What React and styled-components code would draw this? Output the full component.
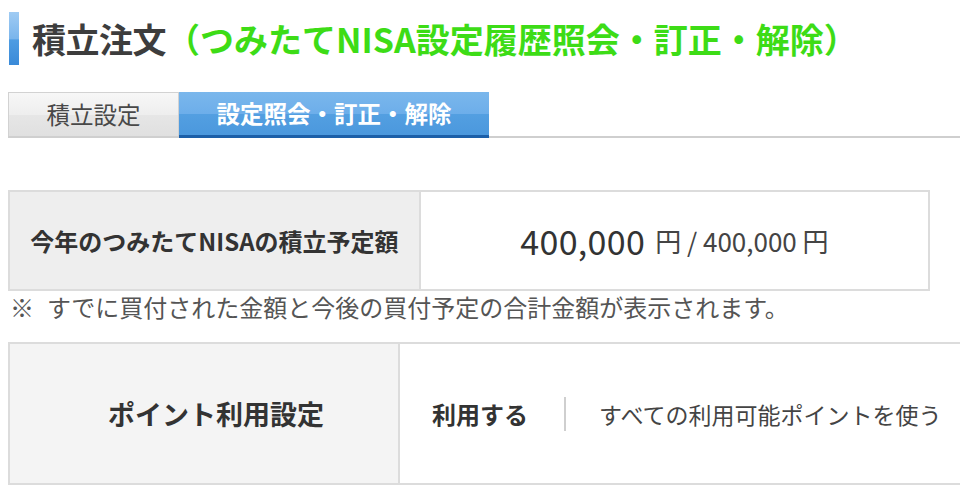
import React from "react";
import styled, { createGlobalStyle } from "styled-components";

const GlobalStyle = createGlobalStyle`
  html, body {
    margin: 0;
    padding: 0;
    background: #fff;
    overflow: hidden;
  }
  body {
    font-family: "Noto Sans CJK JP", "Noto Sans", sans-serif;
    color: #333;
  }
`;

const Page = styled.div`
  width: 960px;
  height: 503px;
  padding: 12px 0 0 8px;
  box-sizing: border-box;
  overflow: hidden;
`;

const Heading = styled.h1`
  display: flex;
  align-items: center;
  margin: 0;
  height: 53px;
  font-size: 34px;
  font-weight: 700;
  line-height: 1;
  white-space: nowrap;
`;

const HeadingBar = styled.span`
  width: 10px;
  height: 53px;
  margin: 0 13px 0 1px;
  background: linear-gradient(#9fcbf3 0%, #7ab5ec 50%, #4e9ce2 53%, #3a8ad8 100%);
`;

const HeadingMain = styled.span`
  color: #3d3d3d;
  letter-spacing: -0.5px;
`;

const HeadingSub = styled.span`
  color: #3ddc16;
`;

const Tabs = styled.nav`
  display: flex;
  margin-top: 27px;
  height: 44px;
  border-bottom: 2px solid #cfcfcf;
`;

const Tab = styled.div`
  display: flex;
  align-items: center;
  justify-content: center;
  width: ${(p) => p.$width}px;
  box-sizing: border-box;
  font-size: 23.5px;
  line-height: 1;
  ${(p) =>
    p.$active
      ? `
    color: #fff;
    font-weight: 700;
    background: linear-gradient(#7ab7ec 0%, #6daeea 50%, #539fe1 52%, #4b98dd 100%);
    border-bottom: 3px solid #1c5fa8;
    margin-bottom: -2px;
  `
      : `
    color: #484848;
    background: linear-gradient(#f7f7f7 0%, #eeeeee 50%, #e6e6e6 52%, #e0e0e0 100%);
    border: 1px solid #d2d2d2;
    border-bottom: none;
  `}
`;

const InfoTable = styled.div`
  display: grid;
  grid-template-columns: ${(p) => p.$labelWidth}px 1fr;
  width: ${(p) => p.$width}px;
  height: ${(p) => p.$height}px;
  margin-top: ${(p) => p.$top}px;
  border: 2px solid #dcdcdc;
  box-sizing: border-box;
`;

const LabelCell = styled.div`
  display: flex;
  align-items: center;
  justify-content: center;
  padding-left: ${(p) => p.$shift || 0}px;
  background: ${(p) => p.$bg};
  border-right: 2px solid #dcdcdc;
  font-weight: 700;
  font-size: ${(p) => p.$size}px;
  color: #333;
  white-space: nowrap;
`;

const ValueCell = styled.div`
  display: flex;
  align-items: center;
  justify-content: ${(p) => (p.$left ? "flex-start" : "center")};
  padding-left: ${(p) => (p.$left ? "32px" : "0")};
  white-space: nowrap;
  color: #333;
`;

const Amount = styled.span`
  font-size: 34px;
  margin-right: 10px;
  letter-spacing: 0.3px;
`;

const AmountSub = styled.span`
  font-size: 26px;
  color: #444;
`;

const Note = styled.p`
  margin: 3px 0 0 2px;
  font-size: 24px;
  line-height: 26px;
  color: #555;
  white-space: nowrap;
`;

const NoteMark = styled.span`
  margin-right: 13px;
`;

const PointOn = styled.span`
  font-size: 24px;
  font-weight: 700;
  color: #333;
`;

const Divider = styled.span`
  width: 2px;
  height: 34px;
  margin: 0 33px 0 36px;
  background: #cfcfcf;
`;

const PointText = styled.span`
  font-size: 23px;
  color: #444;
`;

export default function App() {
  return (
    <>
      <GlobalStyle />
      <Page>
        <Heading>
          <HeadingBar />
          <HeadingMain>積立注文</HeadingMain>
          <HeadingSub>（つみたてNISA設定履歴照会・訂正・解除）</HeadingSub>
        </Heading>

        <Tabs>
          <Tab $width={171}>積立設定</Tab>
          <Tab $width={310} $active>
            設定照会・訂正・解除
          </Tab>
        </Tabs>

        <InfoTable $labelWidth={411} $width={922} $height={101} $top={52}>
          <LabelCell $bg="#eeeeee" $size={24}>
            今年のつみたてNISAの積立予定額
          </LabelCell>
          <ValueCell>
            <Amount>400,000</Amount>
            <AmountSub>円 / 400,000 円</AmountSub>
          </ValueCell>
        </InfoTable>

        <Note>
          <NoteMark>※</NoteMark>
          すでに買付された金額と今後の買付予定の合計金額が表示されます。
        </Note>

        <InfoTable $labelWidth={390} $width={1000} $height={143} $top={22}>
          <LabelCell $bg="#f4f4f4" $size={27} $shift={24}>
            ポイント利用設定
          </LabelCell>
          <ValueCell $left>
            <PointOn>利用する</PointOn>
            <Divider />
            <PointText>すべての利用可能ポイントを使う</PointText>
          </ValueCell>
        </InfoTable>
      </Page>
    </>
  );
}
